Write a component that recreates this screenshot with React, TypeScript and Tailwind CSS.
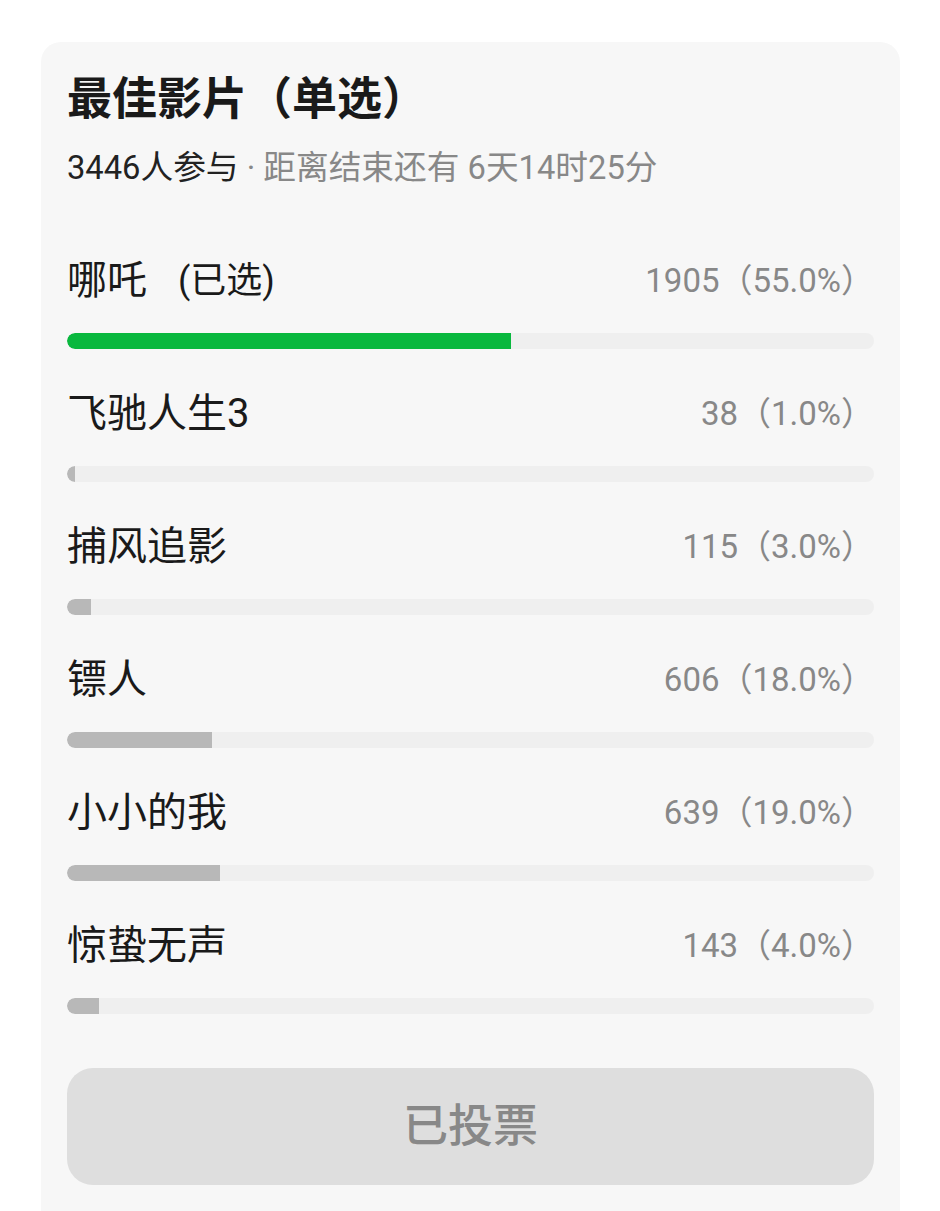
import React from "react";

const options = [
  { name: "哪吒", selected: true, count: 1905, pct: 55.0 },
  { name: "飞驰人生3", count: 38, pct: 1.0 },
  { name: "捕风追影", count: 115, pct: 3.0 },
  { name: "镖人", count: 606, pct: 18.0 },
  { name: "小小的我", count: 639, pct: 19.0 },
  { name: "惊蛰无声", count: 143, pct: 4.0 },
];

const font = { fontFamily: 'Roboto, "Noto Sans CJK SC", sans-serif' };

export default function App() {
  return (
    <div className="min-h-[1211px] bg-white pt-[42px] pl-[41px]" style={font}>
      <div className="w-[859px] min-h-[1169px] rounded-t-[20px] bg-[#f7f7f7] px-[26px] pt-[26px]">
        <h1 className="text-[45px] font-bold leading-[64px] text-[#1a1a1a]">最佳影片（单选）</h1>
        <div className="mt-[16px] text-[32.7px] leading-[40px] text-[#222]">
          3446人参与<span className="text-[#888]"> · 距离结束还有 6天14时25分</span>
        </div>
        <div className="mt-[63px] flex flex-col">
          {options.map((o) => (
            <div key={o.name} className="h-[133px]">
              <div className="flex items-center justify-between h-[60px]">
                <span className="flex items-center text-[40px] text-[#1a1a1a]">
                  {o.name}
                  {o.selected && <span className="ml-[31px] text-[36px]">(已选)</span>}
                </span>
                <span className="text-[33px] text-[#888]">
                  {o.count}（{o.pct.toFixed(1)}%）
                </span>
              </div>
              <div className="mt-[22px] h-[16px] w-[807px] overflow-hidden rounded-full bg-[#efefef]">
                <div
                  className={o.selected ? "h-full rounded-l-full bg-[#09b83e]" : "h-full rounded-l-full bg-[#b8b8b8]"}
                  style={{ width: `${Math.max(o.pct, 1)}%` }}
                />
              </div>
            </div>
          ))}
        </div>
        <div className="mt-[19px] flex h-[117px] w-[807px] items-center justify-center rounded-[26px] bg-[#dedede] text-[45px] font-medium text-[#888]">
          已投票
        </div>
      </div>
    </div>
  );
}
